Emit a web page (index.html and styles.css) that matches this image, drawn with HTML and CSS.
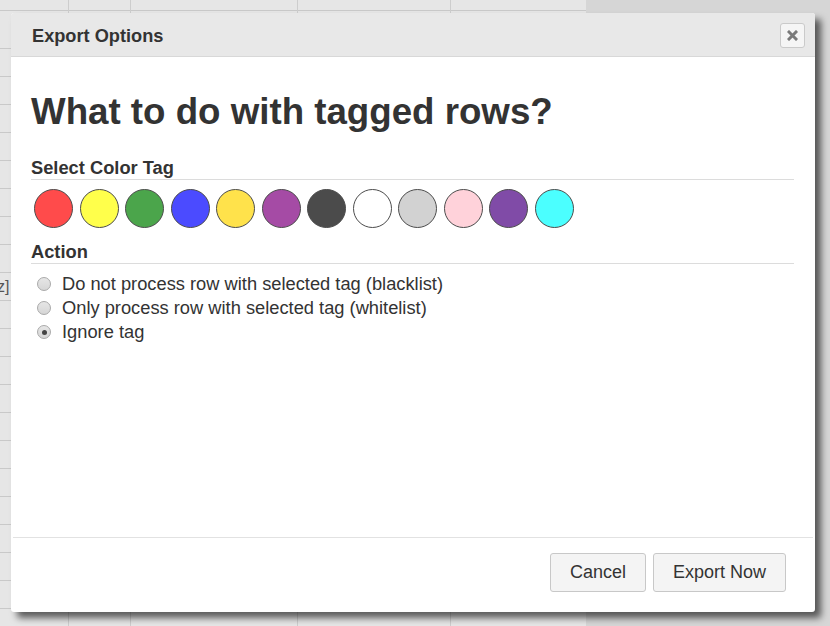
FILE: index.html
```html
<!DOCTYPE html>
<html lang="en">
<head>
<meta charset="utf-8">
<title>Export Options</title>
<link rel="stylesheet" href="styles.css">
</head>
<body>
<div class="sheet">
  <span class="cell-text">z]</span>
</div>
<div class="modal" role="dialog" aria-labelledby="modal-title">
  <div class="modal-header">
    <h3 class="modal-title" id="modal-title">Export Options</h3>
    <button class="close-btn" type="button" aria-label="Close">
      <svg width="11" height="11" viewBox="0 0 11 11" aria-hidden="true">
        <path d="M2 2 L9 9 M9 2 L2 9" stroke="#7a7a7a" stroke-width="3" stroke-linecap="square"/>
      </svg>
    </button>
  </div>
  <div class="modal-body">
    <h1 class="question">What to do with tagged rows?</h1>
    <div class="section-label">Select Color Tag</div>
    <div class="swatches">
      <span class="swatch c-red"></span>
      <span class="swatch c-yellow"></span>
      <span class="swatch c-green"></span>
      <span class="swatch c-blue"></span>
      <span class="swatch c-gold"></span>
      <span class="swatch c-purple"></span>
      <span class="swatch c-black"></span>
      <span class="swatch c-white"></span>
      <span class="swatch c-silver"></span>
      <span class="swatch c-pink"></span>
      <span class="swatch c-indigo"></span>
      <span class="swatch c-aqua"></span>
    </div>
    <div class="section-label action-label">Action</div>
    <div class="options">
      <label class="option"><input type="radio" name="action" class="radio"> Do not process row with selected tag (blacklist)</label>
      <label class="option"><input type="radio" name="action" class="radio"> Only process row with selected tag (whitelist)</label>
      <label class="option"><input type="radio" name="action" class="radio" checked> Ignore tag</label>
    </div>
  </div>
  <div class="modal-footer">
    <button class="btn" type="button">Cancel</button>
    <button class="btn" type="button">Export Now</button>
  </div>
</div>
</body>
</html>
```
FILE: styles.css
```css
html, body {
  height: 100%;
}
body {
  margin: 0;
  overflow: hidden;
  font-family: "Liberation Sans", Arial, sans-serif;
  color: #333;
  background-color: #e6e6e6;
}
.sheet {
  height: 100%;
  background-image:
    linear-gradient(to right, transparent 586px, #d6d6d6 586px),
    linear-gradient(#cdcdcd, #cdcdcd),
    linear-gradient(#cdcdcd, #cdcdcd),
    linear-gradient(#cdcdcd, #cdcdcd),
    linear-gradient(#cdcdcd, #cdcdcd),
    repeating-linear-gradient(to bottom, transparent 0 27px, #c9c9c9 27px 28px);
  background-size:
    100% 100%,
    1px 100%,
    1px 100%,
    1px 100%,
    1px 100%,
    586px 100%;
  background-position:
    0 0,
    68px 0,
    130px 0,
    297px 0,
    450px 0,
    0 21px;
  background-repeat: no-repeat, no-repeat, no-repeat, no-repeat, no-repeat, repeat-y;
}
.cell-text {
  display: block;
  padding-top: 277px;
  margin-left: -3px;
  font-size: 16px;
  line-height: 20px;
  color: #555;
}
.modal {
  position: absolute;
  left: 11px;
  top: 13px;
  width: 804px;
  height: 599px;
  background: #fff;
  border-radius: 3px;
  box-shadow: 6px 6px 7px rgba(0, 0, 0, 0.6);
  display: flex;
  flex-direction: column;
  overflow: hidden;
}
.modal-header {
  height: 43px;
  background: #e8e8e8;
  border-bottom: 1px solid #d8d8d8;
  display: flex;
  align-items: center;
  justify-content: space-between;
  padding: 0 10px 0 21px;
}
.modal-title {
  margin: 4px 0 0;
  font-size: 18.2px;
  font-weight: bold;
  color: #333;
}
.close-btn {
  width: 25px;
  height: 25px;
  padding: 0;
  margin-top: 1px;
  border: 1px solid #cacaca;
  border-radius: 3px;
  background: #f5f5f5;
  display: flex;
  align-items: center;
  justify-content: center;
}
.modal-body {
  padding: 0 21px 0 20px;
  flex: 1;
}
.question {
  margin: 34px 0 0;
  font-size: 36.7px;
  line-height: 41px;
  font-weight: bold;
  color: #333;
}
.section-label {
  margin-top: 29px;
  height: 18px;
  line-height: 14px;
  font-size: 18.3px;
  font-weight: bold;
  color: #333;
  border-bottom: 1px solid #dcdcdc;
}
.swatches {
  display: flex;
  gap: 6.5px;
  padding: 9px 0 0 3px;
}
.swatch {
  width: 37px;
  height: 37px;
  border-radius: 50%;
  border: 1px solid #000;
  opacity: 0.7;
}
.c-red { background: #ff0000; }
.c-yellow { background: #ffff00; }
.c-green { background: #008000; }
.c-blue { background: #0000ff; }
.c-gold { background: #ffd700; }
.c-purple { background: #800080; }
.c-black { background: #000000; }
.c-white { background: #ffffff; }
.c-silver { background: #c0c0c0; }
.c-pink { background: #ffc0cb; }
.c-indigo { background: #4b0082; }
.c-aqua { background: #00ffff; }
.action-label {
  margin-top: 17px;
}
.options {
  padding-top: 8px;
}
.option {
  display: flex;
  align-items: center;
  height: 24px;
  font-size: 18.3px;
  color: #333;
}
.radio {
  appearance: none;
  -webkit-appearance: none;
  width: 14px;
  height: 14px;
  margin: 0 11px 0 6px;
  border-radius: 50%;
  border: 1px solid #a9a9a9;
  background: linear-gradient(#e6e6e6, #d6d6d6);
  position: relative;
  flex: none;
}
.radio:checked::after {
  content: "";
  position: absolute;
  left: 3.5px;
  top: 3.5px;
  width: 5px;
  height: 5px;
  border-radius: 50%;
  background: #444;
}
.modal-footer {
  margin: 0 2px;
  border-top: 1px solid #e2e2e2;
  padding: 15px 27px 20px;
  display: flex;
  justify-content: flex-end;
  gap: 7px;
}
.btn {
  height: 39px;
  padding: 0 19px;
  font-family: "Liberation Sans", Arial, sans-serif;
  font-size: 18px;
  color: #333;
  background: #f4f4f4;
  border: 1px solid #c8c8c8;
  border-radius: 3px;
}
```
